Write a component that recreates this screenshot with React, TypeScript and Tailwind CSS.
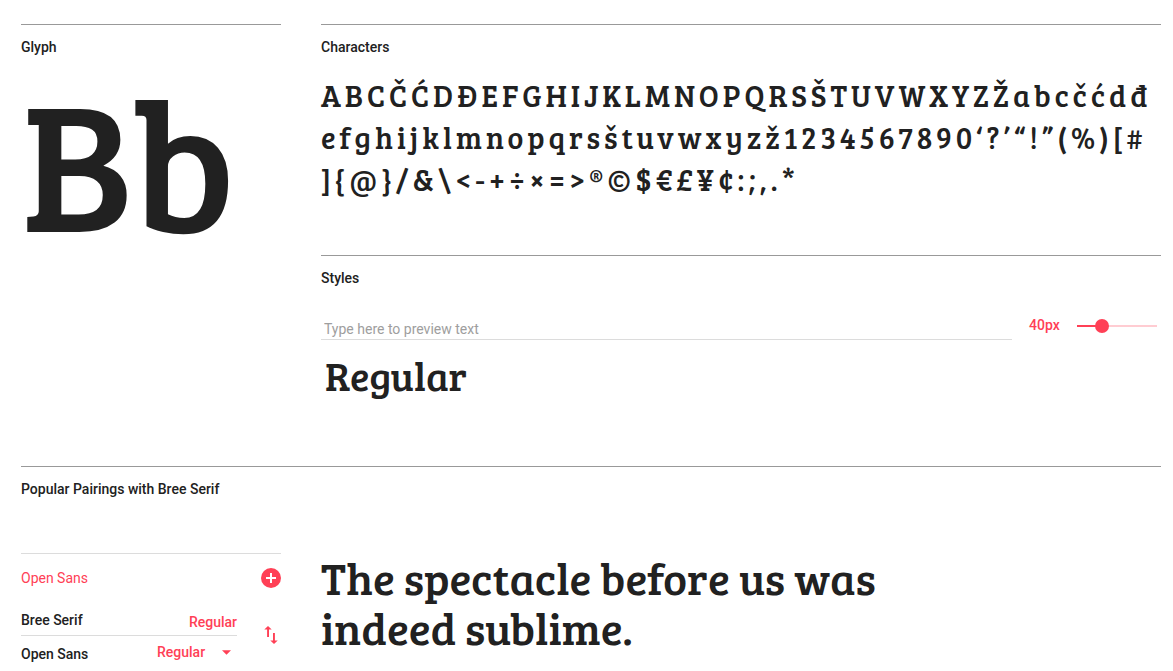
import { useState } from "react";
import type { ReactNode } from "react";

const specimen = "font-['Bree_Serif','DejaVu_Serif_Condensed','DejaVu_Serif',serif]";

const characterRows = [
  "ABCČĆDĐEFGHIJKLMNOPQRSŠTUVWXYZŽabcčćdđ",
  "efghijklmnopqrsštuvwxyzž1234567890‘?’“!”(%)[#",
  "]{@}/&\\<-+÷×=>®©$€£¥¢:;,.*",
];

function SectionTitle({ children }: { children: ReactNode }) {
  return (
    <h2 className="border-t border-[#999] pt-3 text-sm leading-5 font-medium">
      {children}
    </h2>
  );
}

export default function App() {
  const [size, setSize] = useState(40);
  const [preview, setPreview] = useState("");

  return (
    <main className="bg-white pt-6 pr-3 pl-[21px] font-[Roboto,sans-serif] text-[#212121]">
      <div className="grid grid-cols-[260px_1fr] gap-x-10">
        <section>
          <SectionTitle>Glyph</SectionTitle>
          <p className={`${specimen} mt-[2px] text-[185px] leading-[200px]`}>Bb</p>
        </section>

        <div>
          <section className="pb-[55px]">
            <SectionTitle>Characters</SectionTitle>
            <div className={`${specimen} mt-[17px] text-[30px] leading-[42px] tracking-[4px]`}>
              {characterRows.map((row) => (
                <p key={row} className="whitespace-nowrap">{row}</p>
              ))}
            </div>
          </section>

          <section className="pb-[64px]">
            <SectionTitle>Styles</SectionTitle>
            <div className="mt-[26px] flex items-end">
              <input
                type="text"
                aria-label="Preview text"
                placeholder="Type here to preview text"
                value={preview}
                onChange={(e) => setPreview(e.target.value)}
                className="h-[26px] min-w-0 flex-1 border-b border-[#dcdcdc] px-[3px] pt-1 text-sm leading-5 outline-none placeholder:text-[#9e9e9e]"
              />
              <label
                htmlFor="preview-size"
                className="mb-[5px] w-[65px] pl-[17px] text-sm leading-5 font-medium text-[#ff4056]"
              >
                {size}px
              </label>
              <input
                id="preview-size"
                type="range"
                min={8}
                max={125}
                value={size}
                onChange={(e) => setSize(Number(e.target.value))}
                style={{
                  backgroundSize: `${((size - 8) / 117) * 100}% 2px`,
                }}
                className="mr-1 mb-[7px] h-[14px] w-20 appearance-none bg-[linear-gradient(#ff4056,#ff4056)] bg-left bg-no-repeat [&::-webkit-slider-runnable-track]:h-[14px] [&::-webkit-slider-runnable-track]:bg-[linear-gradient(#ff405644,#ff405644)] [&::-webkit-slider-runnable-track]:bg-[length:100%_2px] [&::-webkit-slider-runnable-track]:bg-center [&::-webkit-slider-runnable-track]:bg-no-repeat [&::-webkit-slider-thumb]:size-[14px] [&::-webkit-slider-thumb]:appearance-none [&::-webkit-slider-thumb]:rounded-full [&::-webkit-slider-thumb]:bg-[#ff4056]"
              />
            </div>
            <p className={`${specimen} mt-2 pl-1 text-[40px] leading-[54px]`}>Regular</p>
          </section>
        </div>
      </div>

      <SectionTitle>Popular Pairings with Bree Serif</SectionTitle>

      <div className="mt-[54px] grid grid-cols-[260px_1fr] gap-x-10">
        <section className="border-t border-[#dcdcdc] pt-[14px] text-sm leading-5">
          <div className="flex items-center justify-between">
            <a href="#open-sans" className="text-[#ff4056]">Open Sans</a>
            <button
              type="button"
              aria-label="Add Open Sans"
              className="size-5 rounded-full bg-[#ff4056]"
            >
              <svg viewBox="0 0 20 20" className="size-5" fill="#fff">
                <path d="M9 5h2v4h4v2h-4v4H9v-4H5V9h4z" />
              </svg>
            </button>
          </div>

          <div className="mt-[22px] flex items-start font-medium">
            <div className="w-[216px]">
              <div className="flex justify-between border-b border-[#dcdcdc] pb-[3px]">
                <span>Bree Serif</span>
                <span className="pt-[2px] text-[#ff4056]">Regular</span>
              </div>
              <div className="flex justify-between pt-[6px]">
                <label htmlFor="pair-style" className="pt-[2px]">Open Sans</label>
                <div className="grid w-20 grid-cols-1 items-start text-[#ff4056]">
                  <select
                    id="pair-style"
                    className="col-start-1 row-start-1 h-5 appearance-none leading-5 outline-none"
                  >
                    <option>Regular</option>
                  </select>
                  <svg
                    viewBox="0 0 9 5"
                    className="pointer-events-none col-start-1 row-start-1 mt-2 mr-[6px] h-[5px] w-[9px] justify-self-end"
                    fill="currentColor"
                  >
                    <path d="M0 0.300h9L4.500 4.800z" />
                  </svg>
                </div>
              </div>
            </div>
            <button type="button" aria-label="Swap fonts" className="mt-4 ml-[26px] text-[#ff4056]">
              <svg viewBox="0 0 16 18" className="h-[18px] w-4" fill="currentColor">
                <path d="M5 0 1.300 3.600h2.800V11h1.900V3.600h2.700zM11.900 14.400V7H10v7.400H7.300L11 18l3.700-3.600z" />
              </svg>
            </button>
          </div>
        </section>

        <p className={`${specimen} max-w-[600px] text-[45px] leading-[50px]`}>
          The spectacle before us was indeed sublime.
        </p>
      </div>
    </main>
  );
}
